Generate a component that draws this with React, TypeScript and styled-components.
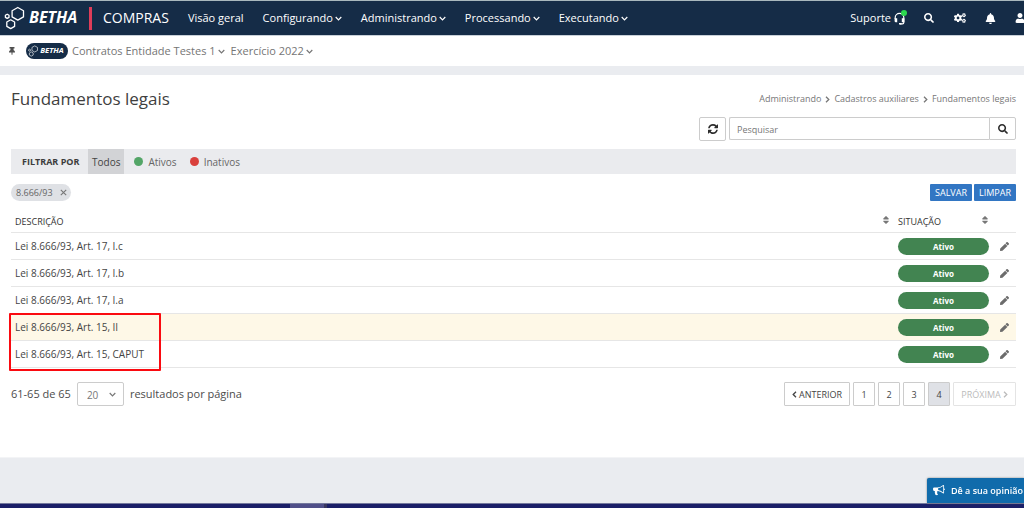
import React from "react";
import styled, { createGlobalStyle } from "styled-components";
import { FaBell, FaCogs, FaPen, FaSearch, FaSort, FaThumbtack, FaUser } from "react-icons/fa";

const GlobalStyle = createGlobalStyle`
  *, *::before, *::after { box-sizing: border-box; }
  body { margin: 0; background: #eaecf0; }
  body, button, input, select { font-family: "Open Sans", "Noto Sans", sans-serif; }
  button { cursor: pointer; }
  svg { display: block; flex: none; }
`;

const Page = styled.div`
  min-height: 100vh;
  display: flex;
  flex-direction: column;
  overflow: hidden;
  color: #444;
  font-size: 10px;
`;

const TopBar = styled.header`
  height: 36px;
  display: flex;
  align-items: center;
  background: #152c47;
  border-top: 1px solid #a9b8bd;
  border-bottom: 1px solid #c8d0d8;
  color: #fff;
  overflow: hidden;
`;

const Brand = styled.a`
  display: flex;
  align-items: center;
  width: 89px;
  padding-left: 4px;
  color: #fff;
`;

const BrandRule = styled.span`
  width: 3px;
  height: 23px;
  background: #df3d59;
`;

const ProductName = styled.span`
  margin: 0 19px 0 11px;
  font-size: 14px;
  line-height: 20px;
`;

const MainNav = styled.nav`
  display: flex;
  flex: 1;
  gap: 19px;
`;

const NavLink = styled.a`
  display: flex;
  align-items: center;
  gap: 2px;
  color: #fff;
  font-size: 11px;
  line-height: 16px;
  text-decoration: none;
  white-space: nowrap;
`;

const Tools = styled.div`
  display: flex;
  align-items: center;
`;

const SupportButton = styled.button`
  position: relative;
  display: flex;
  align-items: center;
  gap: 3px;
  margin-right: 19px;
  padding: 0;
  border: 0;
  background: none;
  color: #fff;
  font-size: 11px;
  line-height: 16px;
`;

const OnlineDot = styled.span`
  position: absolute;
  top: 0;
  right: -2px;
  width: 6px;
  height: 6px;
  border-radius: 50%;
  background: #2bd84f;
`;

const ToolButton = styled.button<{ $width: number }>`
  display: flex;
  width: ${(p) => p.$width}px;
  padding: 0;
  border: 0;
  overflow: hidden;
  background: none;
  color: #fff;
`;

const ContextBar = styled.div`
  height: 30px;
  display: flex;
  align-items: center;
  padding-left: 8px;
  background: #fff;
`;

const PinButton = styled.button`
  width: 18px;
  padding: 0;
  border: 0;
  background: none;
  color: #4f4f4f;
`;

const EntityBadge = styled.span`
  display: flex;
  align-items: center;
  justify-content: center;
  width: 42px;
  height: 16px;
  margin-right: 4px;
  border-radius: 8px;
  background: #152c47;
  color: #fff;
`;

const ContextButton = styled.button`
  display: flex;
  align-items: center;
  gap: 2px;
  margin-right: 6px;
  padding: 0;
  border: 0;
  background: none;
  color: #757575;
  font-size: 11px;
  line-height: 16px;
`;

const Content = styled.main`
  margin-top: 9px;
  padding: 12px 8px 51px 11px;
  background: #fff;
  border-bottom: 1px solid #f3f4f6;
`;

const TitleRow = styled.div`
  display: flex;
  align-items: center;
  justify-content: space-between;
`;

const Title = styled.h1`
  margin: 0;
  font-size: 17px;
  font-weight: 400;
  line-height: 24px;
  color: #3f3f3f;
`;

const Breadcrumb = styled.nav`
  display: flex;
  align-items: center;
  gap: 4px;
  font-size: 9px;
  line-height: 14px;
  color: #777;
`;

const Crumb = styled.a`
  color: #777;
  text-decoration: none;
`;

const SearchRow = styled.form`
  display: flex;
  justify-content: flex-end;
  gap: 3px;
  margin: 6px 0 8px;
`;

const IconButton = styled.button`
  display: flex;
  align-items: center;
  justify-content: center;
  width: 27px;
  height: 24px;
  padding: 0;
  border: 1px solid #ccc;
  border-radius: 2px;
  background: #fff;
  color: #2c2c2c;
`;

const SearchGroup = styled.div`
  display: flex;
  width: 287px;
  & > button { border-radius: 0 2px 2px 0; height: 23px; }
`;

const SearchInput = styled.input`
  flex: 1;
  min-width: 0;
  height: 23px;
  padding: 1px 7px 0;
  border: 1px solid #ccc;
  border-right: 0;
  border-radius: 2px 0 0 2px;
  font-size: 9px;
  color: #555;
  &::placeholder { color: #777; opacity: 1; }
`;

const FilterBar = styled.div`
  display: flex;
  align-items: stretch;
  height: 25px;
  padding-left: 11px;
  background: #eaebee;
`;

const FilterLabel = styled.strong`
  width: 66px;
  font-size: 9px;
  font-weight: 700;
  line-height: 25px;
  color: #3c3c3c;
`;

const FilterOption = styled.button<{ $active?: boolean }>`
  display: flex;
  align-items: center;
  gap: 5px;
  margin-right: 7px;
  padding: 0 ${(p) => (p.$active ? 4 : 3)}px;
  border: 0;
  background: ${(p) => (p.$active ? "#d2d3d6" : "none")};
  color: ${(p) => (p.$active ? "#444" : "#666")};
  font-size: 10px;
  line-height: 14px;
`;

const Dot = styled.span<{ $color: string }>`
  width: 9px;
  height: 9px;
  border-radius: 50%;
  background: ${(p) => p.$color};
`;

const TagRow = styled.div`
  display: flex;
  align-items: center;
  gap: 2px;
  margin-top: 10px;
`;

const Tag = styled.span`
  display: flex;
  align-items: center;
  gap: 7px;
  height: 17px;
  margin-right: auto;
  padding: 0 4px 0 5px;
  border-radius: 9px;
  background: #dfe1e5;
  color: #666;
  font-size: 9px;
  line-height: 14px;
`;

const TagRemove = styled.button`
  padding: 0;
  border: 0;
  background: none;
  color: #777;
`;

const ActionButton = styled.button`
  width: 42px;
  height: 17px;
  padding: 0;
  border: 0;
  border-radius: 1px;
  background: #3276c3;
  color: #fff;
  font-size: 9px;
  line-height: 17px;
`;

const TableArea = styled.div`
  position: relative;
  margin-top: 9px;
`;

const Table = styled.table`
  width: 100%;
  table-layout: fixed;
  border-collapse: separate;
  border-spacing: 0;
`;

const HeadCell = styled.th<{ $width?: number }>`
  width: ${(p) => (p.$width ? `${p.$width}px` : "auto")};
  height: 23px;
  padding: 2px 3px 0 4px;
  border-bottom: 1px solid #e6e6e6;
  text-align: left;
  font-size: 9px;
  font-weight: 400;
  line-height: 14px;
  color: #333;
`;

const HeadContent = styled.div`
  display: flex;
  align-items: flex-start;
  justify-content: space-between;
  & > svg { color: #777; }
`;

const Row = styled.tr<{ $highlight: boolean }>`
  background: ${(p) => (p.$highlight ? "#fef8e7" : "#fff")};
`;

const Cell = styled.td`
  height: 27px;
  padding: 0 4px;
  border-bottom: 1px solid #e6e6e6;
  font-size: 10px;
  line-height: 14px;
  color: #444;
`;

const Status = styled.span`
  display: block;
  height: 17px;
  border-radius: 9px;
  background: #428451;
  color: #fff;
  font-size: 8px;
  font-weight: 700;
  line-height: 17px;
  text-align: center;
`;

const EditButton = styled.button`
  display: block;
  margin-left: auto;
  padding: 0 3px;
  border: 0;
  background: none;
  color: #6c6c6c;
`;

const Marker = styled.div`
  position: absolute;
  left: -2px;
  bottom: -3px;
  width: 152px;
  height: 58px;
  border: 2px solid #fa0a10;
  border-radius: 1px;
  pointer-events: none;
`;

const Footer = styled.div`
  display: flex;
  align-items: center;
  justify-content: space-between;
  margin-top: 14px;
`;

const PageSize = styled.label`
  display: flex;
  align-items: center;
  gap: 6px;
  font-size: 11px;
  line-height: 16px;
  color: #4c4c4c;
`;

const SelectWrap = styled.span`
  position: relative;
  display: flex;
  color: #777;
  & > svg { position: absolute; right: 8px; top: 10px; pointer-events: none; }
`;

const Select = styled.select`
  appearance: none;
  width: 47px;
  height: 24px;
  padding: 2px 9px 0;
  border: 1px solid #ccc;
  border-radius: 2px;
  background: #fff;
  color: #777;
  font-size: 10px;
`;

const Pager = styled.nav`
  display: flex;
  gap: 3px;
`;

const PageButton = styled.button<{ $wide?: number; $current?: boolean }>`
  display: flex;
  align-items: center;
  justify-content: center;
  gap: 2px;
  width: ${(p) => p.$wide ?? 22}px;
  height: 24px;
  padding: 0;
  border: 1px solid #ccc;
  border-radius: 1px;
  background: ${(p) => (p.$current ? "#dfe1e6" : "#fff")};
  color: #444;
  font-size: 9px;
  &:disabled { color: #bbb; border-color: #e4e4e4; }
`;

const FeedbackButton = styled.button`
  position: fixed;
  right: 0;
  bottom: 5px;
  z-index: 1;
  display: flex;
  align-items: center;
  gap: 6px;
  width: 97px;
  height: 25px;
  padding: 0 0 0 6px;
  border: 0;
  border-radius: 2px 0 0 0;
  background: #106bab;
  box-shadow: 0 0 2px #777;
  color: #fff;
  font-size: 9px;
  font-weight: 600;
  white-space: nowrap;
`;

const BottomStrip = styled.div`
  display: flex;
  height: 5px;
  margin-top: auto;
  padding-left: 290px;
  background: #1b1f68;
  border-top: 1px solid #74789d;
`;

const BottomTab = styled.span`
  width: 37px;
  background: #504f89;
  border-right: 3px solid #39375f;
`;

const BethaLogo = ({ width, height }: { width: number; height: number }) => (
  <svg width={width} height={height} viewBox="0 0 78 24" role="img" aria-label="Betha">
    <g fill="none" stroke="#fff" strokeWidth="1.3" strokeLinejoin="round">
      <path d="M13.800 1.500 19.500 4.700v6.200l-5.700 3.200-5.700-3.200V4.700z" />
      <path d="M6.700 13.800 10.600 16v4.400l-3.900 2.200-3.900-2.200V16z" />
      <path d="M3.200 8.200 5 9.200v2.200l-1.800 1-1.800-1V9.200z" />
    </g>
    <text x="25" y="17" fill="#fff" fontFamily="Open Sans, sans-serif" fontSize="16" fontWeight="700" fontStyle="italic">BETHA</text>
  </svg>
);

const AngleDown = () => (
  <svg width="7" height="5" viewBox="0 0 7 5" fill="none" stroke="currentColor" strokeWidth="1.200">
    <path d="M.7 1 3.500 3.800 6.300 1" />
  </svg>
);

const AngleSide = ({ back }: { back?: boolean }) => (
  <svg width="5" height="7" viewBox="0 0 5 7" fill="none" stroke="currentColor" strokeWidth="1.300">
    <path d={back ? "M4 .7 1.200 3.500 4 6.300" : "M1 .7 3.800 3.500 1 6.300"} />
  </svg>
);

const RefreshIcon = () => (
  <svg width="10" height="10" viewBox="0 0 1536 1536" fill="currentColor">
    <path d="M1511 928q0 5-1 7-64 268-268 434.500T764 1536q-146 0-282.500-55T238 1324l-129 129q-19 19-45 19t-45-19-19-45V960q0-26 19-45t45-19h448q26 0 45 19t19 45-19 45l-137 137q71 66 161 102t187 36q134 0 250-65t186-179q11-17 53-117 8-23 30-23h192q13 0 22.500 9.500t9.500 22.500zM1536 128v448q0 26-19 45t-45 19h-448q-26 0-45-19t-19-45 19-45l138-138Q969 256 768 256q-134 0-250 65T332 500q-11 17-53 117-8 23-30 23H50q-13 0-22.500-9.500T18 608v-7q65-268 270-434.500T768 0q146 0 284 55.500T1297 212l130-129q19-19 45-19t45 19 19 45z" />
  </svg>
);

const BullhornIcon = () => (
  <svg width="12" height="11" viewBox="0 0 1792 1664" fill="currentColor">
    <path d="M1664 512q53 0 90.500 37.500T1792 640t-37.500 90.500T1664 768v384q0 52-38 90t-90 38q-417-347-812-380-58 19-91 66t-31 100.500 40 92.500q-20 33-23 65.500t6 58 33.500 55 48 50T768 1434q-29 58-111.500 83t-168.500 11.500T356 1472q-7-23-29.500-87.500t-32-94.500-23-89-15-101 3.500-98.500T282 896H160q-66 0-113-47T0 736V544q0-66 47-113t113-47h480q435 0 896-384 52 0 90 38t38 90zm-128 604V162q-394 302-768 343v270q377 42 768 341z" />
  </svg>
);

const HeadsetIcon = () => (
  <svg width="11" height="13" viewBox="0 0 11 13">
    <path d="M1.200 7V5.600a4.300 4.300 0 0 1 8.600 0V10.500q0 1.300-1.300 1.300H6" fill="none" stroke="currentColor" strokeWidth="1.200" />
    <path d="M.6 6.300h2.600v4H1.900Q.6 10.300.6 9zM7.800 6.300h2.600V10.300H7.800zM5 11h2.500v1.600H5z" fill="currentColor" />
  </svg>
);

const CloseIcon = () => (
  <svg width="7" height="7" viewBox="0 0 7 7" stroke="currentColor" strokeWidth="1.100">
    <path d="M.8.8 6.200 6.200M6.200.8.8 6.200" />
  </svg>
);

const menus = ["Configurando", "Administrando", "Processando", "Executando"];

const rows = [
  { text: "Lei 8.666/93, Art. 17, I.c", highlight: false },
  { text: "Lei 8.666/93, Art. 17, I.b", highlight: false },
  { text: "Lei 8.666/93, Art. 17, I.a", highlight: false },
  { text: "Lei 8.666/93, Art. 15, II", highlight: true },
  { text: "Lei 8.666/93, Art. 15, CAPUT", highlight: false },
];

export default function App() {
  return (
    <Page>
      <GlobalStyle />
      <TopBar>
        <Brand href="#"><BethaLogo width={78} height={24} /></Brand>
        <BrandRule />
        <ProductName>COMPRAS</ProductName>
        <MainNav>
          <NavLink href="#">Visão geral</NavLink>
          {menus.map((m) => (
            <NavLink href="#" key={m}>{m}<AngleDown /></NavLink>
          ))}
        </MainNav>
        <Tools>
          <SupportButton>Suporte<HeadsetIcon /><OnlineDot /></SupportButton>
          <ToolButton $width={30} aria-label="Pesquisar"><FaSearch size={10} /></ToolButton>
          <ToolButton $width={31} aria-label="Configurações"><FaCogs size={12} /></ToolButton>
          <ToolButton $width={30} aria-label="Notificações"><FaBell size={11} /></ToolButton>
          <ToolButton $width={9} aria-label="Usuário"><FaUser size={10} /></ToolButton>
        </Tools>
      </TopBar>
      <ContextBar>
        <PinButton aria-label="Fixar"><FaThumbtack size={8} /></PinButton>
        <EntityBadge><BethaLogo width={38} height={12} /></EntityBadge>
        <ContextButton>Contratos Entidade Testes 1<AngleDown /></ContextButton>
        <ContextButton>Exercício 2022<AngleDown /></ContextButton>
      </ContextBar>
      <Content>
        <TitleRow>
          <Title>Fundamentos legais</Title>
          <Breadcrumb aria-label="Localização">
            <Crumb href="#">Administrando</Crumb><AngleSide />
            <Crumb href="#">Cadastros auxiliares</Crumb><AngleSide />
            <Crumb href="#">Fundamentos legais</Crumb>
          </Breadcrumb>
        </TitleRow>
        <SearchRow>
          <IconButton type="button" aria-label="Atualizar"><RefreshIcon /></IconButton>
          <SearchGroup>
            <SearchInput placeholder="Pesquisar" aria-label="Pesquisar" />
            <IconButton type="button" aria-label="Buscar"><FaSearch size={10} /></IconButton>
          </SearchGroup>
        </SearchRow>
        <FilterBar>
          <FilterLabel>FILTRAR POR</FilterLabel>
          <FilterOption $active>Todos</FilterOption>
          <FilterOption><Dot $color="#53a567" />Ativos</FilterOption>
          <FilterOption><Dot $color="#d9403c" />Inativos</FilterOption>
        </FilterBar>
        <TagRow>
          <Tag>8.666/93<TagRemove aria-label="Remover filtro"><CloseIcon /></TagRemove></Tag>
          <ActionButton>SALVAR</ActionButton>
          <ActionButton>LIMPAR</ActionButton>
        </TagRow>
        <TableArea>
          <Table>
            <thead>
              <tr>
                <HeadCell><HeadContent>DESCRIÇÃO<FaSort size={10} /></HeadContent></HeadCell>
                <HeadCell $width={99}><HeadContent>SITUAÇÃO<FaSort size={10} /></HeadContent></HeadCell>
                <HeadCell $width={23} aria-label="Ações" />
              </tr>
            </thead>
            <tbody>
              {rows.map((r) => (
                <Row key={r.text} $highlight={r.highlight}>
                  <Cell>{r.text}</Cell>
                  <Cell><Status>Ativo</Status></Cell>
                  <Cell><EditButton aria-label="Editar"><FaPen size={9} /></EditButton></Cell>
                </Row>
              ))}
            </tbody>
          </Table>
          <Marker />
        </TableArea>
        <Footer>
          <PageSize>
            61-65 de 65
            <SelectWrap>
              <Select defaultValue="20"><option>10</option><option>20</option><option>50</option></Select>
              <AngleDown />
            </SelectWrap>
            resultados por página
          </PageSize>
          <Pager aria-label="Paginação">
            <PageButton $wide={66}><AngleSide back />ANTERIOR</PageButton>
            <PageButton>1</PageButton>
            <PageButton>2</PageButton>
            <PageButton>3</PageButton>
            <PageButton $current>4</PageButton>
            <PageButton $wide={63} disabled>PRÓXIMA<AngleSide /></PageButton>
          </Pager>
        </Footer>
      </Content>
      <FeedbackButton><BullhornIcon />Dê a sua opinião</FeedbackButton>
      <BottomStrip><BottomTab /></BottomStrip>
    </Page>
  );
}
